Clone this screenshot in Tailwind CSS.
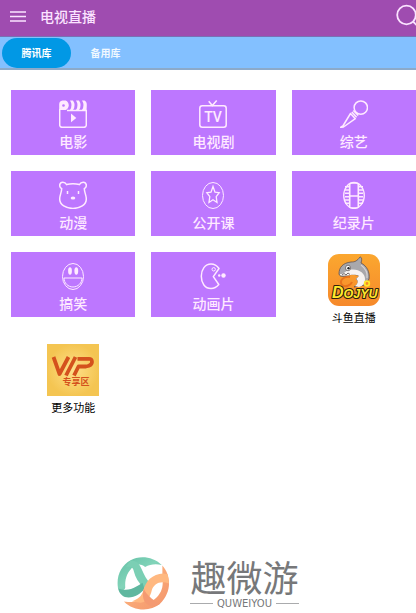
<!DOCTYPE html>
<html lang="zh-CN">
<head>
    <meta charset="UTF-8">
    <meta name="viewport" content="width=device-width, initial-scale=1.0">
    <title>电视直播</title>
    <script src="https://cdn.jsdelivr.net/npm/@tailwindcss/browser@4"></script>
</head>
<body class="min-h-screen flex flex-col overflow-x-hidden bg-white font-['Noto_Sans_CJK_SC',sans-serif]">
    <!-- Header -->
    <header class="h-9 shrink-0 flex items-center justify-between overflow-hidden bg-[#9f4cb0] text-[#fbe3ff]">
        <div class="flex items-center">
            <button type="button" aria-label="菜单" class="ml-2.5 mr-3.5 pb-1">
                <svg class="w-4 h-4 block" viewBox="0 0 16 16" stroke="currentColor" stroke-width="1.6"><path d="M0 4H16M0 8.500H16M0 13H16"/></svg>
            </button>
            <h1 class="text-sm leading-5 font-medium pb-1">电视直播</h1>
        </div>
        <button type="button" aria-label="搜索" class="-mr-1 pb-1">
            <svg class="w-6 h-6 block" viewBox="0 0 24 24" fill="none" stroke="currentColor" stroke-width="1.8"><circle cx="10.500" cy="11" r="9.300"/><path d="M17 17.500L23 23.500"/></svg>
        </button>
    </header>

    <!-- Tabs -->
    <nav class="shrink-0 flex items-center border-t border-t-[#7870b5] border-b-2 border-b-[#8caaca] bg-[#83c0ff] px-0.5 pt-px text-[10px] leading-4 font-bold text-white">
        <button type="button" class="w-[69px] h-[30px] rounded-full bg-[#0198e5]">腾讯库</button>
        <button type="button" class="w-[69px] h-[30px] rounded-full text-[#f0f8ff]">备用库</button>
    </nav>

    <!-- Categories -->
    <main class="grid grid-cols-3 items-start gap-4 pt-5 pl-[11px] text-center text-sm leading-5 font-medium text-[#ffeaff]">
        <a href="#" class="flex flex-col items-center gap-[3px] bg-[#bd77ff] pt-2.5 pb-1">
            <svg class="w-7 h-7" viewBox="0 0 28 28" fill="none" stroke="currentColor" stroke-width="1.5">
                <path d="M.7 9V25a2.300 2.300 0 0 0 2.300 2.300H25a2.300 2.300 0 0 0 2.300-2.300V10.500H8"/>
                <path d="M3.500 .5h3.200q3 1.500 3 4.700t-3 4.800H.2V4q0-3 3.300-3.500z" fill="currentColor" stroke="none"/>
                <path d="M11 .4h3q3.200 4.600 0 9.600h-3q3-5 0-9.600zM17 .4h3q3.200 4.600 0 9.600h-3q3-5 0-9.600zM23 .4h2.500q2.400 1 2.300 4.600t-.3 5H23q3-5 0-9.600z" fill="currentColor" stroke="none"/>
                <circle cx="4.500" cy="5.500" r="1.300" fill="#bd77ff" stroke="none"/>
                <path d="M12 13.500L17.300 18L12 22.300z" fill="currentColor" stroke="none"/>
            </svg>
            <span>电影</span>
        </a>
        <a href="#" class="flex flex-col items-center gap-[3px] bg-[#bd77ff] pt-2.5 pb-1">
            <svg class="w-7 h-7" viewBox="0 0 28 28" fill="none" stroke="currentColor" stroke-width="1.5">
                <rect x=".8" y="5.800" width="26.400" height="21.400" rx="2.500"/>
                <path d="M9.700 1.300L13.300 5.500L17.700 .5"/>
                <text x="14" y="21.500" text-anchor="middle" font-family="Roboto" font-size="14" font-weight="500" fill="currentColor" stroke="none">TV</text>
            </svg>
            <span>电视剧</span>
        </a>
        <a href="#" class="flex flex-col items-center gap-[3px] bg-[#bd77ff] pt-2.5 pb-1">
            <svg class="w-7 h-7" viewBox="0 0 28 28" fill="none" stroke="currentColor" stroke-width="1.5" stroke-linejoin="round">
                <circle cx="20.800" cy="7.600" r="6.700"/>
                <path d="M13.300 10.500L18.200 15.600M11.800 12L16.600 17.200M10.500 13.500L15.300 18.700L3.500 27L.5 27.400L3.200 25.500z"/>
            </svg>
            <span>综艺</span>
        </a>
        <a href="#" class="flex flex-col items-center gap-[3px] bg-[#bd77ff] pt-2.5 pb-1">
            <svg class="w-7 h-7" viewBox="0 0 28 28" fill="none" stroke="currentColor" stroke-width="1.500">
                <path d="M7.500 3.500Q14 1.800 20.500 3.500C22 .5 26.500 .3 27.200 3.500C27.600 5.500 26.500 7 25.300 7.700C25.500 12 27.300 14 27.300 18C27.300 24 21 27.400 14 27.400S.7 24 .7 18C.7 14 2.500 12 2.700 7.700C1.500 7 .4 5.500 .8 3.500C1.500 .3 6 .5 7.500 3.500z"/>
                <path d="M8.500 10V13M19.500 10V13"/>
                <ellipse cx="14" cy="17" rx="2.300" ry="1.500" fill="currentColor" stroke="none"/>
            </svg>
            <span>动漫</span>
        </a>
        <a href="#" class="flex flex-col items-center gap-[3px] bg-[#bd77ff] pt-2.5 pb-1">
            <svg class="w-7 h-7" viewBox="0 0 28 28" fill="none" stroke="currentColor">
                <ellipse cx="14" cy="14.500" rx="10.500" ry="13"/>
                <path d="M14 5.500L16 11.200L20.200 11.700L17.200 15.700L18 21.500L14 18.800L10 21.500L10.800 15.700L7.800 11.700L12 11.200z" stroke-width="1.300"/>
            </svg>
            <span>公开课</span>
        </a>
        <a href="#" class="flex flex-col items-center gap-[3px] bg-[#bd77ff] pt-2.5 pb-1">
            <svg class="w-7 h-7" viewBox="0 0 28 28" fill="none" stroke="currentColor">
                <ellipse cx="14" cy="14.500" rx="10.300" ry="13" stroke-width="1.300"/>
                <path d="M9.700 2.500V26.500M18.300 2.500V26.500M9.400 15H18.600" stroke-width="1.600"/>
                <path d="M7 5V24.500M21 5V24.500" stroke-width="4" stroke-dasharray="1.500 1.800"/>
                <path d="M10 2.200H18M10 26.800H18"/>
            </svg>
            <span>纪录片</span>
        </a>
        <a href="#" class="flex flex-col items-center gap-[3px] bg-[#bd77ff] pt-2.5 pb-1">
            <svg class="w-7 h-7" viewBox="0 0 28 28" fill="none" stroke="currentColor">
                <ellipse cx="14" cy="14.500" rx="10.500" ry="13"/>
                <ellipse cx="11" cy="9" rx="1.900" ry="3.700" fill="currentColor" stroke="none"/>
                <ellipse cx="17.300" cy="9" rx="1.900" ry="3.700" fill="currentColor" stroke="none"/>
                <path d="M5 16H23C23 21 19 25 14 25S5 21 5 16z"/>
            </svg>
            <span>搞笑</span>
        </a>
        <a href="#" class="flex flex-col items-center gap-[3px] bg-[#bd77ff] pt-2.5 pb-1">
            <svg class="w-7 h-7" viewBox="0 0 28 28" fill="none" stroke="currentColor" stroke-width="1.500" stroke-linejoin="round">
                <path d="M20 6.500C17.500 3 14.500 2 12 2C6 2 2.300 7.500 2.300 14.300S6 26.500 12 26.500C15 26.500 17.500 25.300 19.800 22.500L14.300 14.600z"/>
                <circle cx="14.700" cy="7.300" r="1.700" stroke-width="1"/>
                <circle cx="20.200" cy="13.500" r="1.200" fill="currentColor" stroke="none"/>
                <circle cx="24.500" cy="13.500" r="2.200" fill="currentColor" stroke="none"/>
            </svg>
            <span>动画片</span>
        </a>

        <a href="#" class="flex flex-col items-center gap-[3px] pt-0.5 pb-px text-[11px] leading-4 font-normal text-black">
            <svg class="w-[52px] h-[52px]" viewBox="0 0 52 52">
                <defs>
                    <linearGradient id="orange" x2="0" y2="1"><stop stop-color="#fba72f"/><stop offset="1" stop-color="#f6892b"/></linearGradient>
                </defs>
                <rect width="52" height="52" rx="11" fill="url(#orange)"/>
                <path d="M22 23C15 22 11 27 14 31C17 34 23 31 24 28" fill="none" stroke="#e8731c" stroke-width="2"/>
                <path d="M11 20C11 13 15 9 23 8C27 8 29 7 32 3C34 3 34 6 33 9C39 12 42 18 41 25L37 31L26 33C31 30 31 27 28 25L32 22C27 20 24 20 21 21C17 22 12 24 11 20z" fill="#a9a8ac" stroke="#5e5253" stroke-width=".8"/>
                <path d="M12 20C15 21 17 17 21 16C30 14 37 19 37 25C37 29 35 32 31 33L27 32C31 29 30 26 28 25L31 22C26 19 18 23 12 21z" fill="#f7f3f1"/>
                <path d="M14 21L16 19.500L18 21L20 19L22 20.500" fill="none" stroke="#55494a" stroke-width=".8"/>
                <ellipse cx="20" cy="14" rx="2.500" ry="2.800" fill="#fff" stroke="#55494a" stroke-width=".7"/>
                <circle cx="20.500" cy="14.300" r="1.200" fill="#222"/>
                <path d="M33 11C37 14 40 18 39 24" fill="none" stroke="#d4d1d4" stroke-width="1.200"/>
                <text x="4" y="43.500" font-family="Liberation Sans" font-weight="bold" font-style="italic" font-size="12.500" fill="#ffe82b" stroke="#30200c" stroke-width="2.200" paint-order="stroke" stroke-linejoin="round"><tspan font-size="16">D</tspan>OJYU</text>
                <circle cx="39" cy="29.500" r="2.300" fill="#f5892b" stroke="#ffe82b" stroke-width="1.800"/>
            </svg>
            <span>斗鱼直播</span>
        </a>
        <a href="#" class="flex flex-col items-center gap-[3px] pt-0.5 pb-px text-[11px] leading-4 font-normal text-black">
            <svg class="w-[52px] h-[52px]" viewBox="0 0 52 52">
                <defs>
                    <radialGradient id="gold"><stop stop-color="#fee08a"/><stop offset="1" stop-color="#f4c552"/></radialGradient>
                </defs>
                <rect width="52" height="52" fill="url(#gold)"/>
                <g fill="none" stroke="#d4521d" stroke-width="3.800" stroke-linejoin="round">
                    <path d="M6.500 13L12.500 30L21.500 13M19 31.500L28.500 13M27 31.500L31.500 22.500H39Q45 21.500 45 18T41.500 14.800H30.500"/>
                </g>
                <text x="29" y="40.500" text-anchor="middle" font-family="Noto Sans CJK SC" font-size="9" font-weight="bold" fill="#d4521d">专享区</text>
            </svg>
            <span>更多功能</span>
        </a>
    </main>

    <!-- Brand -->
    <footer class="mt-auto flex items-center justify-center gap-5 pb-[3px] text-[#77787a]">
        <svg class="w-[53px] h-[53px]" viewBox="0 0 158 160">
            <defs>
                <linearGradient id="teal" x2="1" y2="1"><stop stop-color="#62bfa5"/><stop offset=".5" stop-color="#82d4b9"/><stop offset="1" stop-color="#54ad96"/></linearGradient>
                <linearGradient id="peach" x2="1" y2="1"><stop stop-color="#ffbd82"/><stop offset="1" stop-color="#f3936b"/></linearGradient>
            </defs>
            <!-- outer ring -->
            <path d="M2 94C-4 56 12 26 40 10C66 -6 108 -2 134 24C116 20 98 22 84 30C70 20 60 22 50 28C30 44 22 66 24 92C22 102 10 104 2 94z" fill="url(#teal)"/>
            <path d="M136 26C164 58 164 108 128 142C100 166 48 164 20 134C46 138 64 136 80 128C94 138 106 134 114 126C132 112 140 90 136 66z" fill="url(#peach)"/>
            <!-- crossing ribbons -->
            <path d="M38 12C62 8 68 26 76 42C82 56 88 68 100 80L80 94C64 78 54 62 50 44C48 34 44 28 26 30z" fill="#7bcfb4"/>
            <path d="M2 94C20 102 40 100 56 90C64 86 70 82 76 78L82 96C70 112 54 122 34 122C18 122 6 112 2 94z" fill="#5fb79f"/>
            <path d="M152 52C132 46 112 54 98 66C88 76 82 88 78 102C74 118 62 128 44 134L70 138C92 134 100 118 104 100C110 82 128 70 156 80z" fill="#ffb880"/>
            <path d="M80 96C88 114 102 126 128 142C112 154 92 148 82 134C76 124 76 108 80 96z" fill="#f49a72"/>
        </svg>
        <div>
            <p class="mb-1 text-4xl leading-9">趣微游</p>
            <p class="flex items-center gap-1 font-['DejaVu_Sans',sans-serif] text-[10px] leading-3 before:h-px before:flex-1 before:bg-[#aaabad] after:h-px after:flex-1 after:bg-[#aaabad]">QUWEIYOU</p>
        </div>
    </footer>
</body>
</html>
